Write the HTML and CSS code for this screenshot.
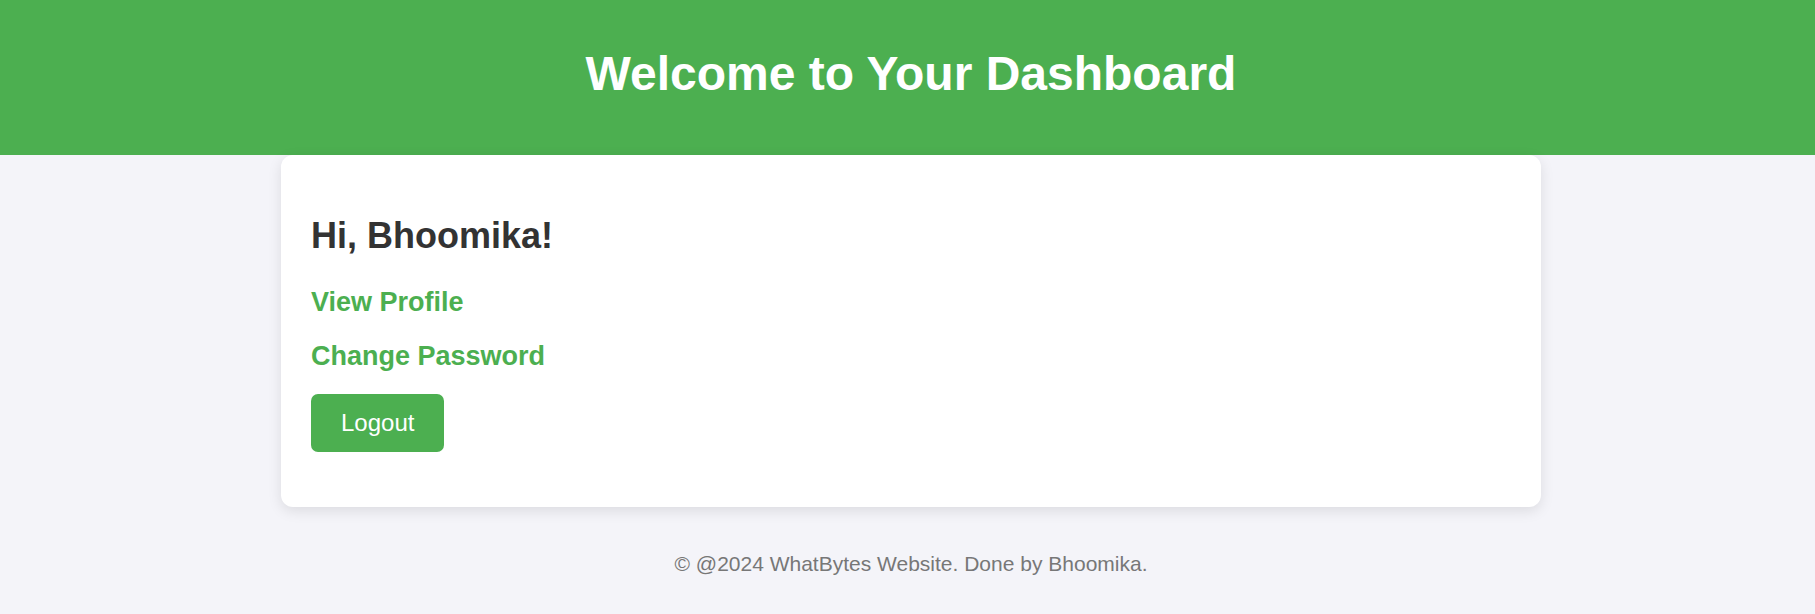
FILE: index.html
```html
<!DOCTYPE html>
<html lang="en">
<head>
<meta charset="utf-8">
<title>Dashboard</title>
<link rel="stylesheet" href="styles.css">
</head>
<body>
<header class="site-header">
  <h1 class="site-title">Welcome to Your Dashboard</h1>
</header>
<main class="page">
  <section class="card">
    <h2 class="greeting">Hi, Bhoomika!</h2>
    <a class="card-link" href="#">View Profile</a>
    <a class="card-link" href="#">Change Password</a>
    <button class="logout-btn" type="button">Logout</button>
  </section>
</main>
<footer class="site-footer">
  <p class="footer-text">© @2024 WhatBytes Website. Done by Bhoomika.</p>
</footer>
</body>
</html>
```

FILE: styles.css
```css
html, body {
  margin: 0;
  padding: 0;
}

body {
  font-family: "Liberation Sans", Arial, Helvetica, sans-serif;
  background: #f4f4f9;
  color: #333;
}

.site-header {
  background: #4caf50;
  color: #fff;
  height: 155px;
  box-sizing: border-box;
  padding: 46px 0 0 7px;
  text-align: center;
}

.site-title {
  margin: 0;
  font-size: 48px;
  font-weight: bold;
}

.page {
  padding-left: 7px;
}

.card {
  width: 1260px;
  box-sizing: border-box;
  margin: 0 auto;
  background: #fff;
  border-radius: 12px;
  padding: 30px 30px 54.5px;
  box-shadow: 0 4px 14px rgba(0, 0, 0, 0.1);
  display: flex;
  flex-direction: column;
  align-items: flex-start;
}

.greeting {
  margin: 30px 0 30px;
  font-size: 36px;
  font-weight: bold;
  color: #333;
}

.card-link {
  display: block;
  font-size: 27px;
  font-weight: bold;
  color: #4caf50;
  text-decoration: none;
  margin-bottom: 22.5px;
}

.logout-btn {
  font-family: inherit;
  font-size: 24px;
  color: #fff;
  background: #4caf50;
  border: none;
  border-radius: 7px;
  padding: 15px 30px;
  cursor: pointer;
}

.site-footer {
  padding-left: 7px;
  text-align: center;
}

.footer-text {
  margin: 45px 0 0;
  font-size: 21px;
  color: #777;
}
```
